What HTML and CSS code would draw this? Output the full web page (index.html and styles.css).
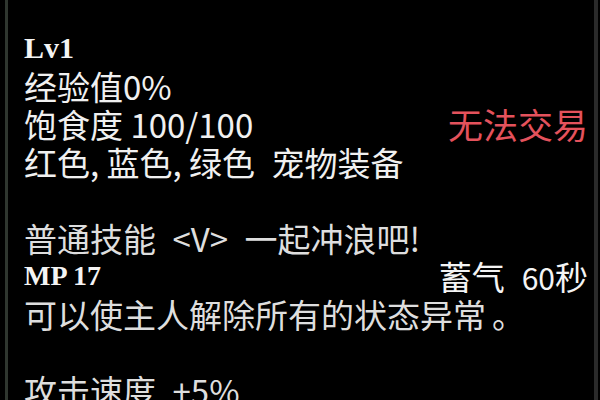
FILE: index.html
```html
<!DOCTYPE html>
<html lang="zh-CN">
<head>
<meta charset="utf-8">
<title>宠物装备</title>
<link rel="stylesheet" href="styles.css">
</head>
<body>
<div class="panel">
  <div class="row"><span class="latin lv">Lv1</span></div>
  <div class="row"><span>经验值0%</span></div>
  <div class="row split"><span>饱食度 100/100</span><span class="red">无法交易</span></div>
  <div class="row"><span>红色<span class="h">,</span>蓝色<span class="h">,</span>绿色<span class="h"> </span>宠物装备</span></div>
  <div class="row blank"></div>
  <div class="row soft"><span>普通技能<span class="h"> </span>&lt;V&gt;<span class="h"> </span>一起冲浪吧!</span></div>
  <div class="row split"><span class="latin">MP 17</span><span class="charge">蓄气<span class="num">60</span>秒</span></div>
  <div class="row soft"><span>可以使主人解除所有的状态异常<span class="dot">。</span></span></div>
  <div class="row blank"></div>
  <div class="row soft"><span>攻击速度<span class="h"> </span>+5%</span></div>
</div>
</body>
</html>
```
FILE: styles.css
```css
html, body {
  margin: 0;
  padding: 0;
  background: #000;
  height: 400px;
  overflow: hidden;
}

.panel {
  box-sizing: border-box;
  margin-left: 5px;
  width: 593px;
  height: 400px;
  border-left: 3px solid #2f362f;
  border-right: 4px solid #2a2a2a;
  padding: 29px 6px 0 16px;
  font-family: "Noto Sans CJK SC", "Noto Sans", sans-serif;
  font-size: 33px;
  color: #f0f0f0;
  overflow: hidden;
}

.row {
  height: 38px;
  line-height: 38px;
  white-space: nowrap;
  display: flex;
  align-items: center;
}

.split {
  justify-content: space-between;
}

.soft {
  color: #dedede;
}

.h {
  display: inline-block;
  width: 0.5em;
  text-align: left;
}

.dot {
  margin-left: 6px;
}

.latin {
  font-family: "Liberation Serif", serif;
  font-weight: bold;
  font-size: 28px;
  color: #f4f4f4;
}

.lv {
  font-size: 30px;
}

.red {
  color: #e4525c;
  font-size: 35px;
}

.charge {
  font-size: 33px;
  color: #f4f4f4;
}

.num {
  font-size: 30px;
  margin-left: 17px;
}
```
